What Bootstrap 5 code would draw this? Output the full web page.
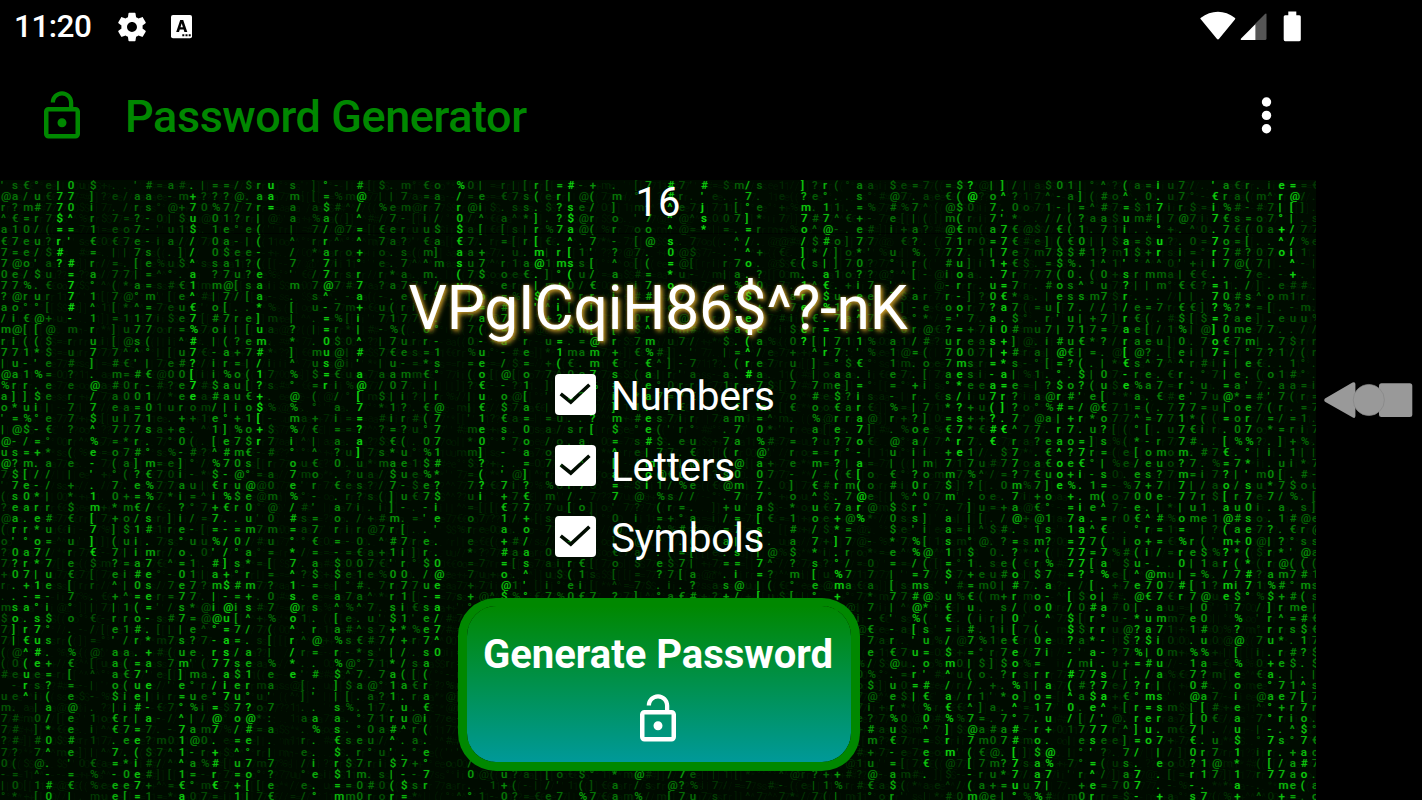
<!DOCTYPE html>
<html lang="en">
<head>
<meta charset="utf-8">
<meta name="viewport" content="width=device-width, initial-scale=1">
<title>Password Generator</title>
<link href="https://cdn.jsdelivr.net/npm/bootstrap@5.3.0/dist/css/bootstrap.min.css" rel="stylesheet">
<style>
body{background:#000;color:#fff;font-family:Roboto,"Liberation Sans",sans-serif;overflow:hidden}
.screen{width:1316px}
.statusbar{height:54px;padding:0 14px 0 14px}
.clock{font-size:31.5px;font-weight:500;line-height:54px;letter-spacing:-.5px;width:101px}
.appbar{height:126px;padding:0 23px 2px 35px}
.app-title{font-size:45px;font-weight:500;line-height:126px;padding-top:2px;color:#080;margin-left:36px;letter-spacing:-.42px;white-space:nowrap}
.stage{height:620px;background:#000b00}
.rain{position:absolute;inset:0;overflow:hidden;font-size:11.5px;font-weight:500;line-height:11.11px;padding-left:1px}
.rain-col{flex:0 0 11.11px;width:11.11px}
.rain-col span{display:block;height:11.11px;white-space:pre;color:rgba(18,225,18,var(--g));text-shadow:0 0 1px rgba(0,220,0,calc(var(--g)*.6)),5px 1px rgba(0,170,0,.08)}
.seam{position:absolute;left:0;right:0;top:53px;height:1px;background:rgba(0,0,0,.6)}
.front{position:relative}
.count{font-size:40px;line-height:46px;height:46px}
.pass{font-size:60.5px;line-height:72px;height:72px;margin-top:47px;letter-spacing:-.2px;text-shadow:2px 2px 5px rgba(235,180,50,.9),0 0 3px rgba(200,150,40,.55);white-space:nowrap}
.opts{width:218px;margin:29px 0 0 12px;gap:30px}
.opt{height:41px;gap:15px;font-size:40.5px;line-height:41px;letter-spacing:-.3px;white-space:nowrap}
.opt span{position:relative;top:2px}
.generate{width:402px;height:173px;margin:41px 0 0 2px;border:9px solid #080;border-top-width:8px;border-radius:38px;background:linear-gradient(#080,#099) padding-box;color:#fff;padding:25px 0 0}
.generate b{font-size:40px;font-weight:700;line-height:48px;margin-left:-2px;white-space:nowrap}
.navpane{width:106px;padding-left:8px}
svg{display:block;flex:none}
</style>
</head>
<body>
<div class="d-flex vh-100">
  <div class="screen d-flex flex-column">
    <div class="statusbar d-flex align-items-center">
      <span class="clock">11:20</span>
      <svg width="34" height="34" viewBox="0 0 24 24" fill="#fff"><path d="M19.43 12.98c.04-.32.07-.64.07-.98s-.03-.66-.07-.98l2.11-1.65c.19-.15.24-.42.12-.64l-2-3.46c-.12-.22-.39-.3-.61-.22l-2.49 1c-.52-.4-1.08-.73-1.69-.98l-.38-2.65C14.46 2.18 14.25 2 14 2h-4c-.25 0-.46.18-.49.42l-.38 2.65c-.61.25-1.17.59-1.69.98l-2.49-1c-.23-.09-.49 0-.61.22l-2 3.46c-.13.22-.07.49.12.64l2.11 1.65c-.04.32-.07.65-.07.98s.03.66.07.98l-2.11 1.65c-.19.15-.24.42-.12.64l2 3.46c.12.22.39.3.61.22l2.49-1c.52.4 1.08.73 1.69.98l.38 2.65c.03.24.24.42.49.42h4c.25 0 .46-.18.49-.42l.38-2.65c.61-.25 1.17-.59 1.69-.98l2.49 1c.23.09.49 0 .61-.22l2-3.46c.12-.22.07-.49-.12-.64l-2.11-1.65zM12 15.5c-1.93 0-3.5-1.57-3.5-3.5s1.57-3.5 3.5-3.5 3.5 1.57 3.500 3.500-1.570 3.500-3.500 3.500z"/></svg>
      <svg style="margin-left:22px" width="21" height="24" viewBox="0 0 21 24"><rect width="21" height="23.3" rx="2" fill="#fff"/><path fill="#000" fill-rule="evenodd" d="M9.2 5h3l4.100 12h-2.900l-.800-2.500H8.800L8 17H5.200zM10.700 8.300l-1.200 4h2.400z"/><path fill="#000" d="M11.300 19.300h2v2h-2zm3.200 0h2v2h-2zm3.200 0h2v2h-2z"/></svg>
      <svg class="ms-auto" width="102" height="32" viewBox="0 0 102 32"><path fill="#fff" d="M.8 8.300Q-.2 7.400.9 6.700C11-1.400 25-1.400 34.700 6.700q1.100.8.200 1.700L19.100 27.800q-1.100 1.400-2.300 0z"/><path fill="#555" d="M55.500 17.500V12.500L64.500 3.400q2-1.800 2 0V27.500q0 1.500-1.500 1.500h-9.500z"/><path fill="#fff" d="M55.500 13v16H41.900q-2-.2-.8-1.600z"/><path fill="#fff" d="M88.300.5h8v3.700h3q1.500 0 1.500 1.500v22.800q0 1.800-1.500 1.800H85.200q-1.500 0-1.500-1.800V5.700q0-1.500 1.500-1.500h3.100z"/></svg>
    </div>
    <div class="appbar d-flex align-items-center">
      <svg width="54" height="54" viewBox="0 0 24 24" fill="#080"><path d="M12 17c1.1 0 2-.9 2-2s-.9-2-2-2-2 .9-2 2 .9 2 2 2zm6-9h-1V6c0-2.76-2.24-5-5-5S7 3.24 7 6h1.9c0-1.71 1.39-3.1 3.1-3.1 1.71 0 3.1 1.39 3.1 3.1v2H6c-1.1 0-2 .9-2 2v10c0 1.1.9 2 2 2h12c1.1 0 2-.9 2-2V10c0-1.1-.9-2-2-2zm0 12H6V10h12v10z"/></svg>
      <div class="app-title">Password Generator</div>
      <svg class="ms-auto" width="54" height="54" viewBox="0 0 54 54" fill="#fff"><circle cx="27.5" cy="13" r="4.7"/><circle cx="27.5" cy="26.4" r="4.7"/><circle cx="27.5" cy="39.7" r="4.7"/></svg>
    </div>
    <main class="stage position-relative">
      <div class="rain d-flex" id="rain" aria-hidden="true"></div>
      <div class="seam"></div>
      <div class="front d-flex flex-column align-items-center">
        <div class="count">16</div>
        <div class="pass">VPgICqiH86$^?-nK</div>
        <div class="opts d-flex flex-column">
          <div class="opt d-flex align-items-center"><svg width="41" height="41"><mask id="tick"><rect width="41" height="41" fill="#fff"/><path d="M5.7 19.8L15.8 28 34.4 10.7" fill="none" stroke="#000" stroke-width="3.6"/></mask><rect width="41" height="41" rx="4" fill="#fff" mask="url(#tick)"/></svg><span>Numbers</span></div>
          <div class="opt d-flex align-items-center"><svg width="41" height="41"><rect width="41" height="41" rx="4" fill="#fff" mask="url(#tick)"/></svg><span>Letters</span></div>
          <div class="opt d-flex align-items-center"><svg width="41" height="41"><rect width="41" height="41" rx="4" fill="#fff" mask="url(#tick)"/></svg><span>Symbols</span></div>
        </div>
        <button type="button" class="generate d-flex flex-column align-items-center">
          <b>Generate Password</b>
          <svg style="margin:13px 0 0 -2px" width="54" height="54" viewBox="0 0 24 24" fill="#fff"><path d="M12 17c1.1 0 2-.9 2-2s-.9-2-2-2-2 .9-2 2 .9 2 2 2zm6-9h-1V6c0-2.76-2.24-5-5-5S7 3.24 7 6h1.9c0-1.71 1.39-3.1 3.1-3.1 1.71 0 3.1 1.39 3.1 3.1v2H6c-1.1 0-2 .9-2 2v10c0 1.1.9 2 2 2h12c1.1 0 2-.9 2-2V10c0-1.1-.9-2-2-2zm0 12H6V10h12v10z"/></svg>
        </button>
      </div>
    </main>
  </div>
  <aside class="navpane d-flex align-items-center">
    <svg width="90" height="38" viewBox="0 0 90 38" fill="#999"><path d="M1 17.5L28.5 1.5Q31.3.3 31.4 3v32q-.2 3-3 1.3L1 20.8q-1.5-1.6 0-3.3z"/><rect x="55" y="2.3" width="33.3" height="33.7" rx="2.5"/><circle cx="44.8" cy="19" r="15.6" stroke="#858585" stroke-width=".7"/></svg>
  </aside>
</div>
<script src="https://cdn.jsdelivr.net/npm/bootstrap@5.3.0/dist/js/bootstrap.bundle.min.js"></script>
<script>
// Falling streaks: column, first row, tail brightness, head brightness, glyphs
const streaks = [
[0,0,.4,.65,"'@r^a€7707?a/mr7|@%ao'|@u@"],[0,26,.25,.3,"7'(?@(o?7+r.m$77((# um77?70-|°o"],
[1,0,.4,.8,"sa?€17=@e7@oi@i7uar]*=@-s?$7sear'0?0..so]|"],[1,42,.25,.3,"@0e-e.###?(=0*."],
[2,0,.4,.85,"€/m=0eeo/%r°€[(1-1r]u%$/=m[e0a.r°ar7+-a.r€^(ur^"],
[3,0,.45,.9,"°u#r/u/'$.u°@[(*'%.$i°-=+./-*re*o7*|1=°s7u#e"],[3,44,.3,.35,"esi|0]#7@^1[^."],
[4,0,.22,.8,"e€77(?$au€r[+@$$e=ee|e€°*a//|r#u=/7ue-i$°s.+=?(a/*0^.-#0($"],
[5,0,.8,1,"|77$=r#?"],[6,0,.7,1,"070^=' #=77#-"],[6,13,.3,.6,"mru#?er77?r(e|+*$€iure€[7°o.(%€[=e@ee#e'=€|"],
[8,0,.5,.9,"$]ir1€=ra°1^1ru7].@/7$^%e-'.1m[7]€"],
[10,0,.22,.75,".e.7e€|=7(7[=][7#m#aeu7=o(°70*+](7?e^+|re'aaao$|€€.7=-ee@"],
[11,0,.2,.6,".//=o7|.7*@*1u@^€=00al7*7a(.+mo$u|=i|^1r1/a(€(iir7e.*0e[a"],
[12,0,.4,.85,"'ar?7e7[|a°^17s^'#r0=77r#]?e=€/1iia#0=(o#r.=7ue#|=e(ie7=@r"],
[13,0,.4,.85,"#as---se==m=77(°|€-101s.°m€%%/s#.m7ese=-.*+a'e|-a"],
[16,0,.25,.85,"#m+$1/]$.€eue=^u#0eer+e0-]iai?ie°o=0e7s7|sum]e=°^711^1€a1"],
[17,0,.7,1,".+7u$//^a1^€7%#7?[7e"],[17,20,.3,.6,"o+.(#°-u=°/-u.1177*=e?e'm°u%|a@-a=°"],
[18,3,.12,.3,"@.7 s m#'[7.€/i#am1^.?/*|^7=[u0.|?.@@^7.(arei/m0r%"],
[19,0,.4,.9,"=?%0100s?m|o#o|-ii$#/e1[^%$€i+7=%'#am|i@°-r7./°=@7.+#r€"],
[20,0,.4,.95,"=?71ea$a7@7[7i(ar%aa|°]e#7-r%€.-//]+$-@u=as7ai7"],
[21,0,.35,.8,"/@/?°-e1u[/.r|?+=ouui+%7m0@u$r.=0°s°#=i[7=/s$eu7o/=^u=+1$"],
[22,0,.35,.85,"$.7re|e??s[.e[e7|([€o1o$€s°@e0um/a*rm+s^/.ae1r°?@#e°7o[|7"],
[23,0,.6,1,"rar|((-(eaa*]um#/1?+$[+r"],[24,0,.9,1,"ua="],[24,10,.15,.55,"-%ma.*i7s.%-$7#ra0m@0mu=[=?07%([|%ea'7:a.|7?e€[°."],
[26,0,.4,.9,"smaa|^/7'm.[|?*]^%°@%m%i°o7e%/#=°*7^1s@o^r/*e"],
[27,20,.15,.35,".a/^°um'°#sa°/.?-.r1.^r.'[].a.re/°e/ra?"],[28,0,.2,.8,"][a%7r*'/7su.|.mu$=(°+€|^€or-'=7€=a$=es.r@=.#.'.a%..ie.°re7+0"],
[29,0,.65,.9,"°=$a/ra77@^-==0us=r"],[30,0,.2,.8,"-%#(@^rir7.7%r$@@€i/ai=a?0.€.aor=-$$|a^[a%r%$]|sas€$r$=m7"],
[31,16,.15,.4,"iu%°.==.u.?er7.i-=0e°7%e#s-@^$[%..s.$1=m="],
[32,0,.7,1,"#@/^=^+°r7a+i|^#'a@[7=?a]"],[32,25,.3,.45,"uus?i/r0€01#a^.^€*°7a..°°er7m00i"],[33,24,.18,.4,"7*a?s.+@.a7e.^7us#s7.@a170u°r.#r"],
[35,0,.3,.8,".|e7ea..*a.(1%7€ua0|1i=€*a$7]]mr#1'0rrs$+/|*a11.r#^'$|(rr."],
[36,0,.25,.75,"m7m-r?s7a7er7(ue-m7i?r?(ueu-u-.[7ir071i1*+//(a.uu^..7-$=0r"],[37,0,.12,.35,"°a@[u'(^.7°i7.rs=m.?.#u.°1e$€.=.r]°.7[€'%r.s[€r.@ra°+-s"],
[38,0,.3,.75,"€=riu€m^m°r.(or=*€i|€(°0%$%e7-'.er$/u-see7sa(ra€i(.e°7r"],
[39,0,.35,.9,"oa7/$a]m./%..°-1s°|r@7771#*?$ie'..0@e=a/7^0"],
[41,0,.8,1,"%/r0$€as(u"],[43,0,.45,.85,"|ei^[.+7$-o=a(-ueo€u€1e0]?(?i"],[45,0,.25,.9,"r€.a[=.roe=#7=a-/@-o$€s°-.'7+€1a+#=o@$"],
[46,14,.15,.3,"°#$[?@7a.7°.@i77/.#a[.1%a"],[47,0,.3,.85,"[ss*|r.a€.i.s.re=o1[a=0oa=]?€7+o/as^'°"],
[48,0,.7,1,"r(.]r[m@.|$'"],[50,0,.7,.9,"=r??7.rm°+.i?-=1("],[51,0,.9,1,"#|s$a^[s("],[51,9,.3,.6,"0/[r$.m€0(s..s.1i.r/[.7-.r(e0$.#'.ie$r/"],
[53,0,.5,.8,"+(/r(7'[/€ri.[@mm7%$0?["],[52,0,.3,.5,"-@e@@.1su/r=.m=a.o.?1.ra.^.7.o.-=u€1i€"],[55,0,.4,.85,".m]or-?^a=ir°[r+€s#i]m$=^[a=7"],
[58,0,.5,.9,"7|^7o@.(=7#mr^m%€aea.ee#|moi"],[59,15,.3,.6,"#^|°7.s($7|@1%(=^^.e?.°r?"],[60,0,.9,1,"##^^^s0=*o"],[61,3,.15,.55,"@@.@@u.7.@m7.-'r*€ire.|u%/=°#.=7[.€a.'"],
[62,10,.2,.6,".-a#/'7ar€-r°u€@.e/.a#([|a?#.%s"],[63,0,.95,1,"#'js*"],[65,0,.2,.6,"$.10=..r|.ea.e$|.a1r*a.7(°s@.+/=a.=.s+"],
[66,0,.35,.75,"m.[7.^'7a%7.=a.=(.ra€m7ar@0m7u=7|s=i@/r+-"],[67,0,.8,1,"/7°]=/^o.7$+ea(^r#"],[68,0,.3,.85,"s.e*r.+.?0.+7ea/ea7|m=0%@a077a[s[|7=|[s/"],[69,14,.15,.4,"%e7.$|.^*#'+7.°$€..@^?("],
[71,7,.25,.55,"€m.a7i$0+u(7o€.r=re-]o*1#a$?m°["],[72,0,.8,1,"]?m7o/](.1re(e?"],[73,0,.3,.8,"?e.#^$*s.^1°€r[^]|7#o%a?=m/€^uo/7*s[e°7r-%"],[74,0,.7,1,"r°17@#/|a€$%.=|r"],
[75,0,.3,.9,"(.1^-o]]1.u17-77°ae$€re?r?(r.7+*].°%m+"],[76,0,.2,.55,"°..€.]o7o+.7a.1:$a]?ar.7°|€m7a@=7r/7a"],[77,0,.5,.9,"as=+e7*0?ie.^.1'€.=ira7o-a[(@r%"],
[80,0,.35,.7,"$@#ei u°°'7.°.a11e=-%r.@u|€#|$0$*e=|[7|'-r€@.uer%u€-=a$ra"],[82,0,.35,.85,"=.7|a?%r[.a-°r/=..+r|?oai|?0^rs'%%/=m#@%['u.r=|"],[83,0,.2,.8,"7a^(?..(-.re*@#(o[i.7]e/imor0°]i[@(7s@*(su=o'#€%0^=e€."],
[85,0,.4,.9,"=€@m@77#i-ro=?u77a°s*=€^+7m$m.aas1=$'u€€=/$m^/a€%]rm"],[86,0,.6,.95,"$($(€17uor-o'=r0me*/?s7re"],[87,0,.95,1,"?@"],[87,2,.25,.75,"0rmr.]ar]r7+e0ssei++*717%?.]|i°$1+=€u(#7=|(/r^7@7([-(m°€"],
[88,4,.2,.4,"(01i..?7.7a7rieuu+€./u^[ou[^@ .em(.i.%°$o.1]=am€7ra@."],[89,0,.6,1,"|o77a=|1.u0?ais|=-a7(?#€"],[89,24,.2,.4,".#/.e=.$.0su0m.r11r].+'a.#0@mu+e"],[90,0,.8,1,"]^.'777+7=€a.0++*a=r].€"],[90,24,.3,.6,"$7=0.+/#?.e#|+s|ie7$?.*.7a7.?*=|7"],
[91,0,.35,.95,"/?0*€€e€r7*7$#]#s|e??7^r77?m7a@.=?(o#r/0[€eor%o^°##[77u°"],[93,5,.2,.85,"em.7..=.u.a°1|a°@7?.a€7+€@1m^r$.oo.(07=r|o1.ro$aa7%*."],[94,0,.3,.9,"$^1//]7=7#|ur7i|[.?@%a.e€€u]o°1s?(%7a-0^.ei ra=7u+.@%7|"],
[95,0,.5,.9,"0--/€($$(oe['|#@=°$r#|ra^ooe"],[96,0,.4,.95,"1a|((€$%0ss7u7u€?.o#=+7o?e+%+=71=77=.[/$$?-/#(^0/"],[97,0,.5,.95,"|]=?10#..^s.|1€|($?'/r.=7€i..iaa777?"],[97,36,.3,.5,"/$0[$a'm7#a.[7e°°r+0+m"],[98,0,.3,.9,"°(^a.|11(°m/+7*=.|(e@*u]r°-1me.^7=[°[o#rr*ai7?$e/7s'=^er"],[99,0,.4,.95,"^##a7|?^0u7/7=?.|0u[€o?s=|s=(^=€(7a%.|a°r--.s7a^'7"],
[101,0,.7,.95,"(^=uia1's?r/rar[€-e"],[101,20,.2,.5,"17((ee.%7-0.i#$[7.0-@$7+[/€[.^]7sa0"],[102,0,.3,.9,"a.$m.=$°r|.e€ea@sr%a=^°*[/e70e€°o(u^e@|*??%=.?°rr]=/.77-1"],[103,0,.3,.9,"=01#.$+^m|.=([e?^ea.(=[-oes+0.^r+i-@7€.ua$|#/rm=euo"],[104,0,.9,1,"i.7|°ur"],[104,7,.35,.9,"^mm.7./u.7.7€.7.rmu?7e|#==/.m07am7i0ua|ssr.7|e..+"],
[106,0,.35,.85,"77r@..i'|€|€$%0e^rre7177m?m77|o=%r0|#r"],[107,0,.2,.85,"/°$7^0=+€€|€[|.ir.°'7*€#.7=|7um re|=[7|e1.%170@|[7€0?r-s7e"],[108,0,.15,.8,".-=i0=°i€?.]$@7|#°u7=(i.#.i/r1e|($1%1@00#u%a?#a[0|.r11.7+$"],[109,0,.9,1,"'€i7.7ri.=7?=]o7"],[109,16,.2,.3,"i7.uu(r.7%7a$.1?'%a.?"],[109,44,.2,.5,"m.7#€.u7@7"],
[110,0,.5,.9,"ar%€7o77.10%?0€=i|=@|=.[€=?o[a@(m?r/me"],[111,0,.3,.9,"€a#s€=#@..#?am7||ea*oo0%.7|/ru#a+*(7i$7%?@[%eoieau$1*1a+#u"],[112,0,.4,.9,"r(-=([?(7/s*eem°e.'=er7%°*'s70se0(*#7°"],
[114,0,.25,.9,"i^77a.7|..o[.7.?.o.'(=*.i.0*7..?|rra%$]rru.+a°a°°-7r[7"],[115,0,.95,1,"er|°+^o"],[115,7,.25,.8,".-em.e.71.1a7r/=].u[7/a1.?*@m#+r^r*re.7e+r.s./7m+m7"],[116,0,.9,1,"=@[|//i^+"],[116,9,.25,.7,"#1-u.$/1#a(.=r+1i.$%.#€°'(7°#m=s.#$|17ri^°+aae=0.a*"],
[117,0,.2,.4,"=/].7%1-.#rmu/r(°°=r=1i%|*#o.s@rs"],[117,33,.5,.9,"@(#m(e#$1?..^[7o$7a#o("],[118,0,.15,.5,"€..s7e.|....%/rr..i=7.7.|7-u[]e@sa(1ss|€€7$$|s7r.°€c7.aor"]
];
// Faint random glyphs fill every cell that no streak covers
const glyphs = "7777aersoum@#$%€?=+-*^°|[](/.01i'";
let seed = 20;
const rnd = () => (seed = (seed * 16807) % 2147483647) / 2147483647;
const cols = 119, rows = 56, grid = [];
for (let c = 0; c < cols; c++) {
  grid[c] = [];
  const base = [.05, .07, .1, .18, .26][Math.floor(rnd() * 5)];
  for (let r = 0; r < rows; r++) {
    const low = r > 36 && c > 39 && c < 80 ? base * 1.8 : base;
    grid[c][r] = [glyphs[Math.floor(rnd() * glyphs.length)], low * (.6 + rnd() * .7)];
  }
}
for (const [c, start, tail, head, text] of streaks) {
  const list = Array.from(text), len = list.length;
  list.forEach((ch, i) => {
    const b = tail + (head - tail) * (len > 1 ? i / (len - 1) : 1);
    if (start + i < rows) grid[c][start + i] = [ch, b * (.85 + rnd() * .15)];
  });
}
document.getElementById("rain").innerHTML = grid.map(col =>
  '<div class="rain-col">' + col.map(([ch, b]) => '<span style="--g:' + b.toFixed(2) + '">' + ch + '</span>').join("") + '</div>').join("");
</script>
</body>
</html>
